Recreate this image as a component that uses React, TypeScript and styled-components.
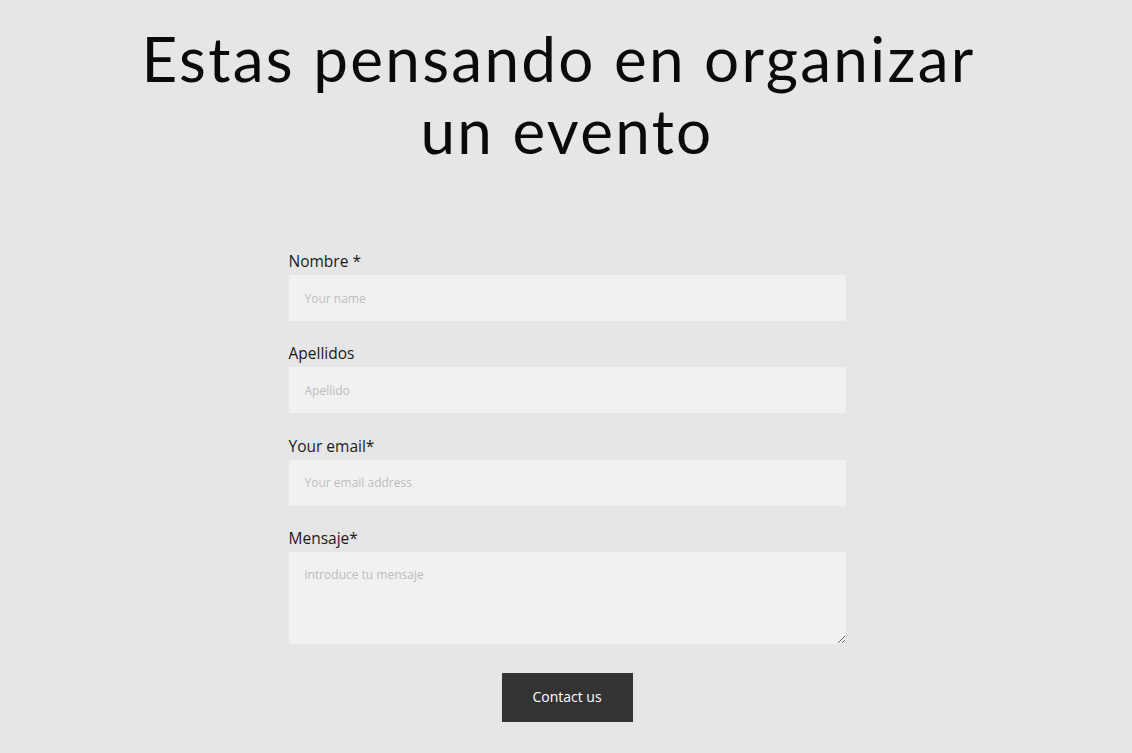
import React from "react";
import styled, { createGlobalStyle } from "styled-components";

const Global = createGlobalStyle`
  html, body { margin: 0; padding: 0; background: #e6e6e6; }
  body { font-family: "Open Sans", "Noto Sans", sans-serif; color: #111; }
  * { box-sizing: border-box; }
`;

const Page = styled.main`
  display: flex;
  flex-direction: column;
  align-items: center;
  padding-top: 22px;
  padding-left: 2px;
`;

const Title = styled.h1`
  margin: 0;
  width: 880px;
  text-align: center;
  font-family: "Lato", "DejaVu Sans", sans-serif;
  font-weight: 400;
  font-size: 62px;
  line-height: 72px;
  letter-spacing: 2.3px;
  color: #0a0a0a;
`;

const Form = styled.form`
  width: 557px;
  margin-top: 88px;
  display: flex;
  flex-direction: column;
`;

const Field = styled.div`
  display: flex;
  flex-direction: column;
  margin-bottom: 25.3px;
`;

const Label = styled.label`
  font-size: 15.5px;
  line-height: 15px;
  color: #1a1a1a;
  height: 21px;
`;

const inputBase = `
  width: 100%;
  border: none;
  outline: none;
  background: #f1f1f1;
  padding: 0 16px;
  font-family: "Open Sans", "Noto Sans", sans-serif;
  font-size: 12px;
  color: #333;
  &::placeholder { color: #bcbcbc; }
`;

const Input = styled.input`
  ${inputBase}
  height: 46px;
`;

const TextArea = styled.textarea`
  ${inputBase}
  height: 92px;
  padding-top: 14px;
  resize: vertical;
  display: block;
`;

const Actions = styled.div`
  display: flex;
  justify-content: center;
  margin-top: 4px;
`;

const Button = styled.button`
  width: 131px;
  height: 49px;
  border: none;
  padding: 0 0 3px;
  background: #333333;
  color: #ffffff;
  font-family: "Open Sans", "Noto Sans", sans-serif;
  font-size: 14px;
  cursor: pointer;
`;

export default function App() {
  return (
    <>
      <Global />
      <Page>
        <Title>{"Estas pensando en organizar\u00a0 un evento"}</Title>
        <Form onSubmit={(e) => e.preventDefault()}>
          <Field>
            <Label>Nombre *</Label>
            <Input placeholder="Your name" />
          </Field>
          <Field>
            <Label>Apellidos</Label>
            <Input placeholder="Apellido" />
          </Field>
          <Field>
            <Label>Your email*</Label>
            <Input placeholder="Your email address" />
          </Field>
          <Field>
            <Label>Mensaje*</Label>
            <TextArea placeholder="introduce tu mensaje" />
          </Field>
          <Actions>
            <Button type="submit">Contact us</Button>
          </Actions>
        </Form>
      </Page>
    </>
  );
}
